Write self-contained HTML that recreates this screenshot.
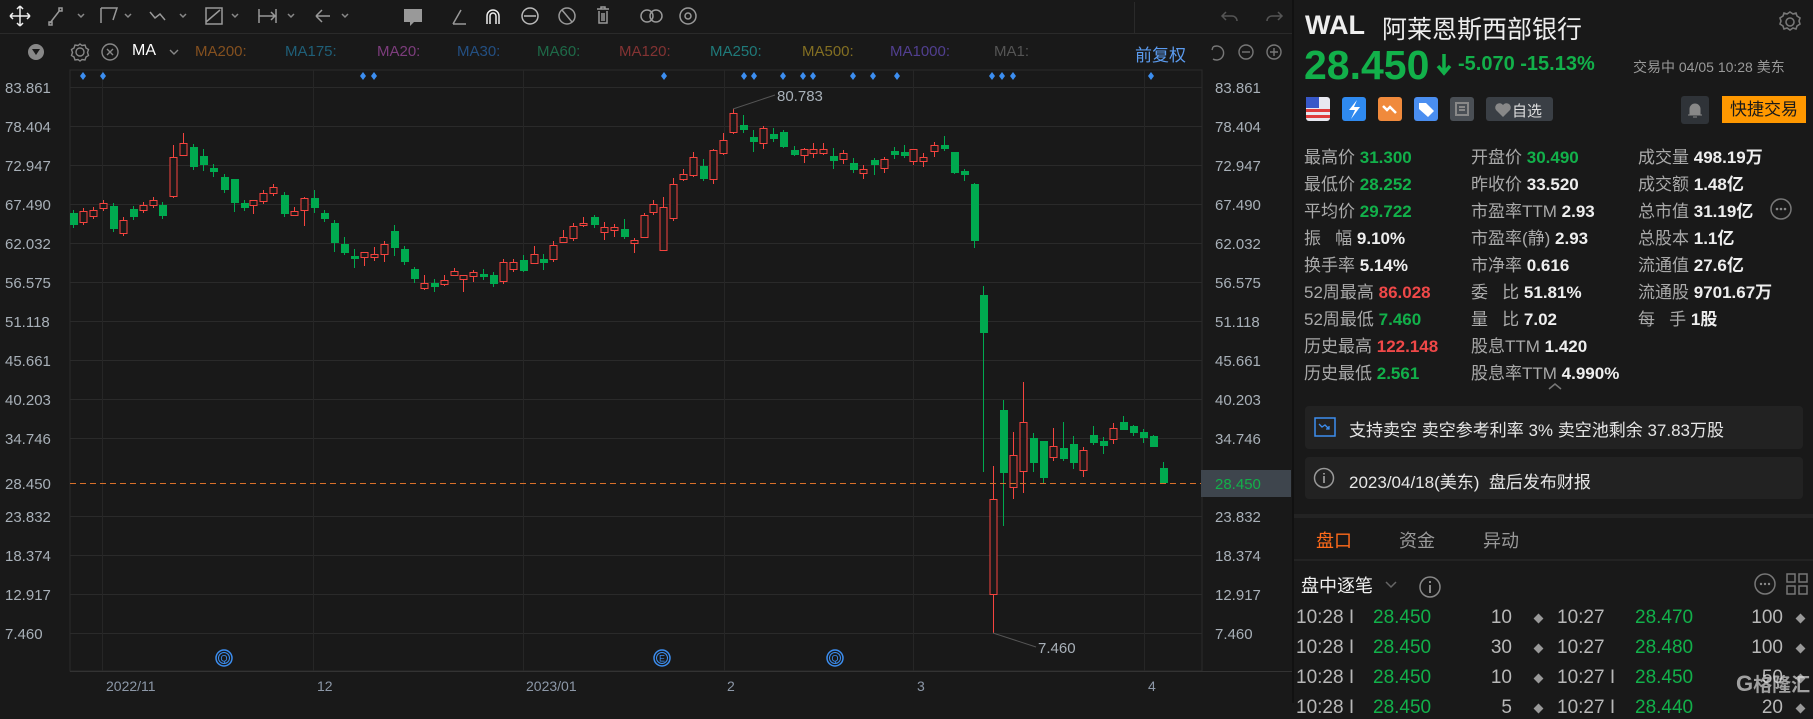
<!DOCTYPE html>
<html><head><meta charset="utf-8">
<style>
*{margin:0;padding:0;box-sizing:border-box}
body{width:1813px;height:703px;background:#191919;overflow:hidden;font-family:"Liberation Sans","Noto Sans CJK SC",sans-serif;color:#ddd;position:relative}
.a{position:absolute;white-space:nowrap}
.lab{color:#a9a9a9;font-size:17px}
.val{font-weight:bold;font-size:17px;color:#eee}
.g{color:#12b04a}.r{color:#f04848}
.tr{font-size:19px;color:#b8b8b8}
</style></head><body>
<svg class="a" style="left:0;top:0" width="1813" height="703" id="s">
<!-- toolbar -->
<line x1="0" y1="33.5" x2="1292" y2="33.5" stroke="#2a2a2a"/>
<g stroke="#bbb" fill="none" stroke-width="1.5">
<path d="M20 6v20M10 16h20M20 6l-3 3M20 6l3 3M20 26l-3-3M20 26l3-3M10 16l3-3M10 16l3 3M30 16l-3-3M30 16l-3 3" stroke="#eee"/>
<path d="M50 23l10-13M49 22h3v3h-3zM59 8h3v3h-3z" stroke="#999"/><path d="M78 14l3 3 3-3" stroke="#888"/>
<path d="M101 8h16l-4 12M101 8v15" stroke="#999"/><path d="M125 14l3 3 3-3" stroke="#888"/>
<path d="M150 12l5 6 5-4 5 6" stroke="#999"/><path d="M180 14l3 3 3-3" stroke="#888"/>
<path d="M206 8h16v16h-16zM206 22l14-12" stroke="#999"/><path d="M232 14l3 3 3-3" stroke="#888"/>
<path d="M259 9v14M259 16h17M276 9v14M271 12l4 4-4 4" stroke="#999"/><path d="M288 14l3 3 3-3" stroke="#888"/>
<path d="M316 16h14M316 16l6-6M316 16l6 6" stroke="#999"/><path d="M342 14l3 3 3-3" stroke="#888"/>
<path d="M404 9h18v13h-8l-4 4v-4h-6z" fill="#999" stroke="none"/>
<path d="M453 24h13M453 24l8-14" stroke="#999"/>
<path d="M487 24v-8a6 6 0 0 1 12 0v8M490 24v-8a3 3 0 0 1 6 0v8" stroke="#eee"/>
<circle cx="530" cy="16" r="8" stroke="#bbb"/><path d="M524 16h12" stroke="#bbb"/>
<circle cx="567" cy="16" r="8" stroke="#999"/><path d="M562 10l10 12" stroke="#999"/>
<path d="M597 9h12M601 9v-2h4v2M599 11v12h8v-12M602 13v8M604 13v8" stroke="#999"/>
<circle cx="647" cy="16" r="6" stroke="#999"/><circle cx="656" cy="16" r="6" stroke="#999"/>
<circle cx="688" cy="16" r="8" stroke="#999"/><circle cx="688" cy="16" r="3" stroke="#999"/>
<path d="M1226 12l-4 4 4 4M1222 16h10a5 5 0 0 1 5 5" stroke="#555"/>
<path d="M1278 12l4 4-4 4M1282 16h-10a5 5 0 0 0-5 5" stroke="#555"/>
</g>
<!-- MA row -->
<circle cx="36" cy="52" r="8" fill="#888"/><path d="M32 49h8l-4 6z" fill="#191919"/>
<g stroke="#888" fill="none" stroke-width="1.4">
<circle cx="80" cy="52" r="4"/><path d="M80 44l2 1.5 3-0.5 1 3 2.5 1.5-1 3 1 3-2.5 1.5-1 3-3-0.5-2 1.5-2-1.5-3 0.5-1-3-2.5-1.5 1-3-1-3 2.5-1.5 1-3 3 0.5z"/>
<circle cx="110" cy="52" r="8"/><path d="M107 49l6 6M113 49l-6 6"/>
<path d="M170 50l4 4 4-4"/>
<path d="M1213 47a7 7 0 1 1 0 12M1213 47l-1 3" stroke="#777"/>
<circle cx="1246" cy="52" r="7" stroke="#777"/><path d="M1242 52h8" stroke="#777"/>
<circle cx="1274" cy="52" r="7" stroke="#777"/><path d="M1270 52h8M1274 48v8" stroke="#777"/>
</g>
<g id="chart"></g>
</svg>
<div class="a" style="left:132px;top:42px;font-size:16px;color:#fff">MA</div>
<div class="a" style="left:195px;top:43px;font-size:15px;color:#84501f">MA200:</div>
<div class="a" style="left:285px;top:43px;font-size:15px;color:#1f5f78">MA175:</div>
<div class="a" style="left:377px;top:43px;font-size:15px;color:#7d3d7d">MA20:</div>
<div class="a" style="left:457px;top:43px;font-size:15px;color:#234f82">MA30:</div>
<div class="a" style="left:537px;top:43px;font-size:15px;color:#1e6a48">MA60:</div>
<div class="a" style="left:619px;top:43px;font-size:15px;color:#833333">MA120:</div>
<div class="a" style="left:710px;top:43px;font-size:15px;color:#1f7a7a">MA250:</div>
<div class="a" style="left:802px;top:43px;font-size:15px;color:#836f22">MA500:</div>
<div class="a" style="left:890px;top:43px;font-size:15px;color:#513f90">MA1000:</div>
<div class="a" style="left:994px;top:43px;font-size:15px;color:#555">MA1:</div>
<div class="a" style="left:1135px;top:41px;font-size:17px;color:#5b9bef">前复权</div>
<div class="a" style="left:1134px;top:2px;width:1px;height:31px;background:#2a2a2a"></div>

<div class="a" style="left:1292px;top:0;width:2px;height:703px;background:#111"></div>
<!-- right panel -->
<div class="a" style="left:1305px;top:10px;font-size:27px;font-weight:bold;color:#eee">WAL</div>
<div class="a" style="left:1382px;top:10px;font-size:25px;color:#eee">阿莱恩斯西部银行</div>
<svg class="a" style="left:1778px;top:10px" width="24" height="24"><g fill="none" stroke="#777" stroke-width="1.6"><circle cx="12" cy="12" r="4"/><path d="M12 2l3 2 3-1 1 3 3 2-1 3 1 3-3 2-1 3-3-1-3 2-3-2-3 1-1-3-3-2 1-3-1-3 3-2 1-3 3 1z"/></g></svg>
<div class="a g" style="left:1304px;top:42px;font-size:41px;font-weight:bold;color:#12b04a">28.450</div>
<svg class="a" style="left:1435px;top:52px" width="18" height="26"><path d="M9 2v18M3 14l6 7 6-7" stroke="#12b04a" stroke-width="3.5" fill="none"/></svg>
<div class="a g" style="left:1458px;top:53px;font-size:20px;font-weight:bold">-5.070 -15.13%</div>
<div class="a" style="left:1633px;top:57px;font-size:14px;color:#999">交易中 04/05 10:28 美东</div>
<svg class="a" style="left:1305px;top:96px" width="320" height="26">
<rect x="1" y="1" width="24" height="24" rx="3" fill="#e8e8f0"/><rect x="1" y="13" width="24" height="3" fill="#e03c3c"/><rect x="1" y="19" width="24" height="3" fill="#e03c3c"/><rect x="1" y="1" width="13" height="11" fill="#3858c8"/>
<rect x="37" y="1" width="24" height="24" rx="3" fill="#2f8af0"/><path d="M52 4l-8 10h6l-4 9 9-12h-6z" fill="#fff"/>
<rect x="73" y="1" width="24" height="24" rx="3" fill="#f08a3c"/><path d="M78 10l4 4 3-3 6 6" stroke="#fff" stroke-width="2.5" fill="none"/>
<rect x="109" y="1" width="24" height="24" rx="3" fill="#4a8ef0"/><path d="M114 7h7l8 8-6 6-9-8z" fill="#fff"/>
<rect x="145" y="1" width="24" height="24" rx="3" fill="#4a4f55"/><path d="M151 7h12v12h-12zM154 11h6M154 14h6" stroke="#888" stroke-width="2" fill="none"/>
<rect x="181" y="1" width="67" height="24" rx="3" fill="#3a3f45"/><path d="M198 21l-7-7a4 4 0 0 1 7-5 4 4 0 0 1 7 5z" fill="#888"/>
</svg>
<div class="a" style="left:1512px;top:100px;font-size:15px;color:#ddd">自选</div>
<svg class="a" style="left:1681px;top:96px" width="28" height="28"><rect width="28" height="28" rx="3" fill="#2f3338"/><path d="M9 19v-6a5 5 0 0 1 10 0v6zM7 19h14M12 21h4" fill="#888" stroke="#888"/></svg>
<div class="a" style="left:1722px;top:96px;width:84px;height:27px;background:#ff9800;color:#1a1a1a;font-size:17px;text-align:center;line-height:27px">快捷交易</div>

<div class="a lab" style="left:1304px;top:143px">最高价 <span class="val g">31.300</span></div>
<div class="a lab" style="left:1304px;top:170px">最低价 <span class="val g">28.252</span></div>
<div class="a lab" style="left:1304px;top:197px">平均价 <span class="val g">29.722</span></div>
<div class="a lab" style="left:1304px;top:224px">振&nbsp;&nbsp;&nbsp;幅 <span class="val">9.10%</span></div>
<div class="a lab" style="left:1304px;top:251px">换手率 <span class="val">5.14%</span></div>
<div class="a lab" style="left:1304px;top:278px">52周最高 <span class="val r">86.028</span></div>
<div class="a lab" style="left:1304px;top:305px">52周最低 <span class="val g">7.460</span></div>
<div class="a lab" style="left:1304px;top:332px">历史最高 <span class="val r">122.148</span></div>
<div class="a lab" style="left:1304px;top:359px">历史最低 <span class="val g">2.561</span></div>
<div class="a lab" style="left:1471px;top:143px">开盘价 <span class="val g">30.490</span></div>
<div class="a lab" style="left:1471px;top:170px">昨收价 <span class="val">33.520</span></div>
<div class="a lab" style="left:1471px;top:197px">市盈率TTM <span class="val">2.93</span></div>
<div class="a lab" style="left:1471px;top:224px">市盈率(静) <span class="val">2.93</span></div>
<div class="a lab" style="left:1471px;top:251px">市净率 <span class="val">0.616</span></div>
<div class="a lab" style="left:1471px;top:278px">委&nbsp;&nbsp;&nbsp;比 <span class="val">51.81%</span></div>
<div class="a lab" style="left:1471px;top:305px">量&nbsp;&nbsp;&nbsp;比 <span class="val">7.02</span></div>
<div class="a lab" style="left:1471px;top:332px">股息TTM <span class="val">1.420</span></div>
<div class="a lab" style="left:1471px;top:359px">股息率TTM <span class="val">4.990%</span></div>
<div class="a lab" style="left:1638px;top:143px">成交量 <span class="val">498.19万</span></div>
<div class="a lab" style="left:1638px;top:170px">成交额 <span class="val">1.48亿</span></div>
<div class="a lab" style="left:1638px;top:197px">总市值 <span class="val">31.19亿</span></div>
<div class="a lab" style="left:1638px;top:224px">总股本 <span class="val">1.1亿</span></div>
<div class="a lab" style="left:1638px;top:251px">流通值 <span class="val">27.6亿</span></div>
<div class="a lab" style="left:1638px;top:278px">流通股 <span class="val">9701.67万</span></div>
<div class="a lab" style="left:1638px;top:305px">每&nbsp;&nbsp;&nbsp;手 <span class="val">1股</span></div>
<svg class="a" style="left:1769px;top:197px" width="24" height="24"><circle cx="12" cy="12" r="10" fill="none" stroke="#777" stroke-width="1.5"/><circle cx="8" cy="12" r="1.3" fill="#888"/><circle cx="12" cy="12" r="1.3" fill="#888"/><circle cx="16" cy="12" r="1.3" fill="#888"/></svg>
<svg class="a" style="left:1548px;top:382px" width="14" height="8"><path d="M1 7l6-5 6 5" stroke="#777" fill="none" stroke-width="1.5"/></svg>

<div class="a" style="left:1305px;top:406px;width:498px;height:43px;background:#222;border-radius:4px"></div>
<svg class="a" style="left:1314px;top:417px" width="22" height="20"><rect x="1" y="1" width="20" height="18" fill="none" stroke="#3c8ef0" stroke-width="1.5"/><path d="M5 7l3 3 3-2 4 4M15 9v3h-3" stroke="#3c8ef0" fill="none" stroke-width="1.3"/></svg>
<div class="a" style="left:1349px;top:416px;font-size:17px;color:#e6e6e6">支持卖空 卖空参考利率 3% 卖空池剩余 37.83万股</div>
<div class="a" style="left:1305px;top:457px;width:498px;height:42px;background:#222;border-radius:4px"></div>
<svg class="a" style="left:1313px;top:467px" width="22" height="22"><circle cx="11" cy="11" r="9.5" fill="none" stroke="#999" stroke-width="1.5"/><path d="M11 9v7M11 6v1.5" stroke="#999" stroke-width="1.8"/></svg>
<div class="a" style="left:1349px;top:468px;font-size:17px;color:#e6e6e6">2023/04/18(美东)&nbsp; 盘后发布财报</div>
<div class="a" style="left:1294px;top:514px;width:519px;height:4px;background:#232323"></div>
<div class="a" style="left:1316px;top:527px;font-size:18px;color:#ff6a1a">盘口</div>
<div class="a" style="left:1399px;top:527px;font-size:18px;color:#999">资金</div>
<div class="a" style="left:1483px;top:527px;font-size:18px;color:#999">异动</div>
<div class="a" style="left:1294px;top:559px;width:519px;height:2px;background:#232323"></div>
<div class="a" style="left:1301px;top:572px;font-size:18px;color:#f0f0f0">盘中逐笔</div>
<svg class="a" style="left:1384px;top:576px" width="72" height="24"><path d="M2 6l5 5 5-5" stroke="#666" fill="none" stroke-width="1.5"/><circle cx="46" cy="11" r="10" fill="none" stroke="#888" stroke-width="1.5"/><path d="M46 9v8M46 5v2" stroke="#888" stroke-width="2"/></svg>
<svg class="a" style="left:1754px;top:572px" width="56" height="24"><circle cx="11" cy="12" r="10" fill="none" stroke="#777" stroke-width="1.5"/><circle cx="7" cy="12" r="1.2" fill="#888"/><circle cx="11" cy="12" r="1.2" fill="#888"/><circle cx="15" cy="12" r="1.2" fill="#888"/><g fill="none" stroke="#777" stroke-width="1.5"><rect x="33" y="2" width="8" height="8"/><rect x="45" y="2" width="8" height="8"/><rect x="33" y="14" width="8" height="8"/><rect x="45" y="14" width="8" height="8"/></g></svg>
<div id="trades"></div>
<div class="a" style="left:1736px;top:670px;font-size:22px;font-weight:bold;color:rgba(220,220,220,.7)">G<span style="font-size:19px">格隆汇</span></div>

<script>
const T=document.getElementById('trades');
const rows=[["10:28 I","28.450","10","10:27","28.470","100"],["10:28 I","28.450","30","10:27","28.480","100"],["10:28 I","28.450","10","10:27 I","28.450","50"],["10:28 I","28.450","5","10:27 I","28.440","20"]];
let h='';rows.forEach((r,i)=>{const y=607+i*30;
h+=`<div class="a tr" style="left:1296px;top:${y}px">${r[0]}</div><div class="a tr g" style="left:1373px;top:${y}px;color:#12b04a">${r[1]}</div><div class="a tr" style="left:1440px;width:72px;text-align:right;top:${y}px">${r[2]}</div><div class="a" style="left:1535px;top:${y+8}px;width:7px;height:7px;background:#999;transform:rotate(45deg)"></div>
<div class="a tr" style="left:1557px;top:${y}px">${r[3]}</div><div class="a tr" style="left:1635px;top:${y}px;color:#12b04a">${r[4]}</div><div class="a tr" style="left:1710px;width:73px;text-align:right;top:${y}px">${r[5]}</div><div class="a" style="left:1797px;top:${y+8}px;width:7px;height:7px;background:#999;transform:rotate(45deg)"></div>`;});
T.innerHTML=h;

const C=[[73,'g',213,225],[83,'r',211,222],[93,'r',210,216],[103,'r',203,208],[113,'g',206,229],[123,'r',220,233],[133,'g',209,217],[143,'r',205,210],[153,'r',200,205],[162,'g',205,216],[173,'r',157,196,145,198],[183,'r',143,155,133,156],[193,'g',147,167],[203,'g',156,165,149,171],[213,'g',168,172,164,177],[224,'g',177,190],[234,'g',179,203,179,212],[244,'g',203,208],[253,'r',200,205,200,214],[263,'r',193,201],[273,'r',187,193],[284,'g',195,214],[294,'r',211,215,207,216],[304,'r',198,210,197,226],[314,'g',198,208,190,213],[324,'g',213,219],[334,'g',223,243,220,252],[344,'g',244,253,237,255],[354,'g',256,259,249,268],[364,'r',252,257,252,266],[374,'r',254,257,247,261],[384,'r',244,254,241,262],[394,'g',231,248,225,256],[404,'g',249,262],[414,'g',269,279,267,283],[424,'r',283,288,275,290],[434,'g',283,287,279,292],[444,'r',280,284,275,286],[454,'r',271,275,268,276],[463,'r',275,279,275,292],[473,'r',272,276,270,282],[483,'g',274,277,269,280],[493,'g',275,284],[503,'r',262,281],[513,'r',262,269],[523,'g',260,271,255,272],[534,'r',254,263,246,264],[543,'g',259,263,254,270],[553,'r',245,259,241,262],[563,'r',237,242,230,243],[573,'r',226,238],[583,'r',223,225,217,227],[594,'g',217,225,215,228],[604,'r',227,232,222,240],[614,'r',227,230,224,237],[624,'g',229,237,219,239],[634,'r',240,243,238,253],[644,'r',215,237,213,238],
[653,'r',204,212,200,215],[663,'r',207,250,197,250],[673,'r',184,218,178,221],[683,'r',174,179,169,181],[693,'r',157,175,152,177],[703,'g',166,179,159,181],[713,'r',150,179,149,184],[723,'r',140,153,133,155],[733,'r',113,132,109,134],[743,'g',125,130,115,133],[753,'g',137,142,130,152],[763,'r',128,143,126,149],[773,'g',134,139,128,142],[783,'g',132,147,130,148],[794,'g',150,155,146,156],[804,'r',149,155,148,163],[813,'r',149,153,143,158],[823,'r',149,153,143,155],[833,'g',156,161,148,169],[843,'r',153,159,150,164],[853,'g',163,170,158,173],[863,'r',169,173,165,179],[874,'g',160,165,158,175],[884,'r',159,168,157,173],[894,'g',151,155,147,159],[904,'g',152,156,145,158],[913,'r',149,161,149,165],[923,'r',157,161,153,167],[934,'r',145,151,142,157],[944,'g',145,149,136,151],[954,'g',152,173,152,174],[964,'g',171,175,169,181],[974,'g',184,241,183,248],
[983,'g',295,333,286,472],[993,'r',499,594,466,633],[1003,'g',410,473,400,526],[1013,'r',455,487,432,499],[1023,'r',422,471,382,493],[1033,'g',438,463,433,472],[1043,'g',441,478,441,483],[1053,'r',446,457,428,461],[1063,'g',448,459,422,461],[1073,'g',444,463,436,469],[1083,'r',450,470,447,477],[1093,'g',435,443,426,445],[1103,'g',441,446,437,454],[1113,'r',428,439,423,444],[1123,'g',422,430,416,430],[1133,'g',426,433,425,436],[1143,'g',432,438,429,443],[1153,'g',436,447,435,447],[1163,'g',468,483,462,484]];
const P=[["83.861",87],["78.404",126],["72.947",165],["67.490",204],["62.032",243],["56.575",282],["51.118",321],["45.661",360],["40.203",399],["34.746",438],["23.832",516],["18.374",555],["12.917",594],["7.460",633]];
let s='';
s+='<rect x="70" y="70" width="1132" height="601" fill="none" stroke="#2c2c2c"/>';
P.forEach(p=>{s+=`<line x1="70" x2="1202" y1="${p[1]+.5}" y2="${p[1]+.5}" stroke="#2a2a2a"/>`;
s+=`<text x="5" y="${p[1]+6}" fill="#a8b0b8" font-size="15">${p[0]}</text><text x="1215" y="${p[1]+6}" fill="#a8b0b8" font-size="15">${p[0]}</text>`;});
[102,313,523,724,913,1144].forEach(x=>{s+=`<line x1="${x+.5}" x2="${x+.5}" y1="70" y2="671" stroke="#262626"/>`;});
s+='<line x1="70" y1="671.5" x2="1292" y2="671.5" stroke="#333"/>';
[[106,'2022/11'],[317,'12'],[526,'2023/01'],[727,'2'],[917,'3'],[1148,'4']].forEach(d=>{s+=`<text x="${d[0]}" y="691" fill="#8d98a8" font-size="14">${d[1]}</text>`;});
[83,103,363,374,664,744,754,783,803,813,853,873,897,992,1002,1013,1151].forEach(x=>{s+=`<path d="M${x} 72l3 4-3 4-3-4z" fill="#3c8ef0"/>`;});
[[224,'Q'],[662,'E'],[835,'Q']].forEach(e=>{s+=`<circle cx="${e[0]}" cy="658" r="8" fill="none" stroke="#3c8ef0" stroke-width="1.5"/><circle cx="${e[0]}" cy="658" r="5.5" fill="none" stroke="#3c8ef0" stroke-width="1"/><text x="${e[0]}" y="661.5" fill="#3c8ef0" font-size="9" text-anchor="middle">${e[1]}</text>`;});
C.forEach(c=>{const [x,col,t,b]=c;const wt=c[4]!==undefined?c[4]:t-3,wb=c[5]!==undefined?c[5]:b+3;
const color=col=='r'?'#f5443f':'#00a94f';
s+=`<line x1="${x+.5}" x2="${x+.5}" y1="${wt}" y2="${wb}" stroke="${color}"/>`;
if(col=='r')s+=`<rect x="${x-3}" y="${t+.5}" width="7" height="${Math.max(b-t,1)}" fill="#191919" stroke="${color}"/>`;
else s+=`<rect x="${x-3}" y="${t}" width="8" height="${Math.max(b-t,2)}" fill="${color}"/>`;});
s+='<line x1="733" y1="109" x2="775" y2="95" stroke="#555"/><text x="777" y="101" fill="#a8b0b8" font-size="15">80.783</text>';
s+='<line x1="993" y1="633" x2="1036" y2="647" stroke="#555"/><text x="1038" y="653" fill="#a8b0b8" font-size="15">7.460</text>';
s+='<line x1="70" y1="483.5" x2="1202" y2="483.5" stroke="#d8702a" stroke-dasharray="6 4"/>';
s+='<rect x="1201" y="470" width="90" height="27" fill="#3e454d"/><text x="1215" y="489" fill="#12b04a" font-size="15">28.450</text>';
s+='<text x="5" y="489" fill="#a8b0b8" font-size="15">28.450</text>';
document.getElementById('chart').innerHTML=s;
</script>
</body></html>
